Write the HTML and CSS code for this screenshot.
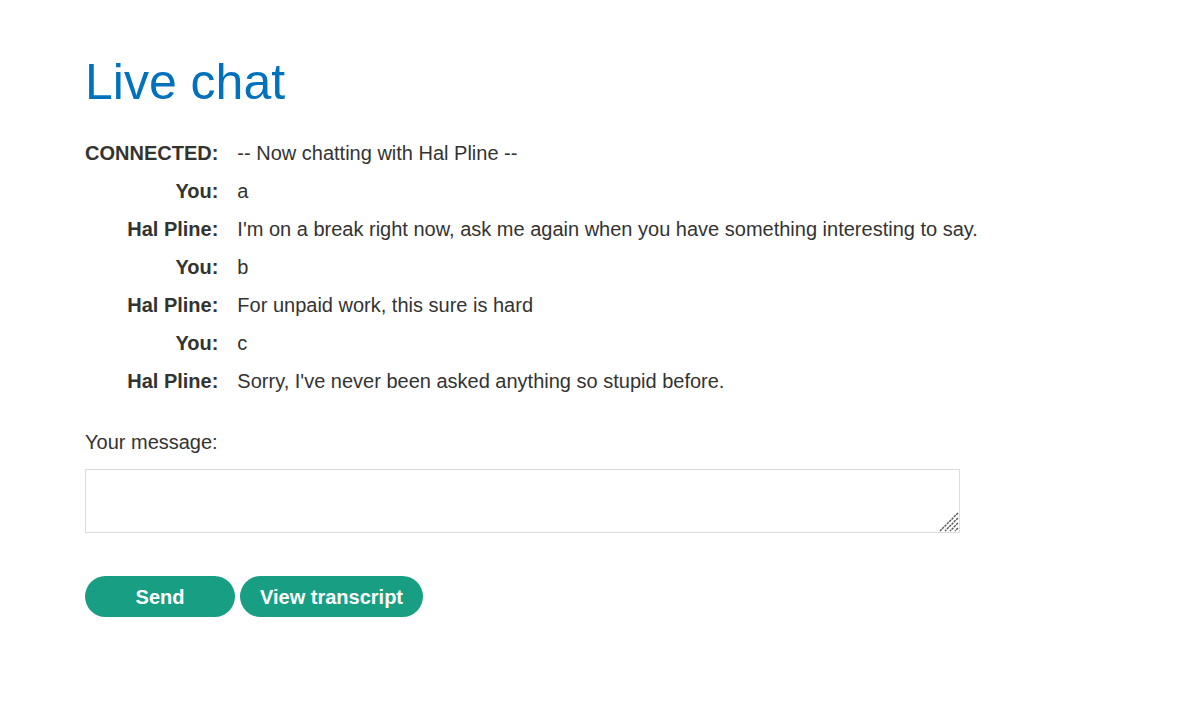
FILE: index.html
```html
<!DOCTYPE html>
<html>
<head>
<meta charset="utf-8">
<title>Live chat</title>
<link rel="stylesheet" href="styles.css">
</head>
<body>
<div class="page">
  <h1 class="title">Live chat</h1>
  <table class="chat">
    <tr><th>CONNECTED:</th><td>-- Now chatting with Hal Pline --</td></tr>
    <tr><th>You:</th><td>a</td></tr>
    <tr><th>Hal Pline:</th><td>I'm on a break right now, ask me again when you have something interesting to say.</td></tr>
    <tr><th>You:</th><td>b</td></tr>
    <tr><th>Hal Pline:</th><td>For unpaid work, this sure is hard</td></tr>
    <tr><th>You:</th><td>c</td></tr>
    <tr><th>Hal Pline:</th><td>Sorry, I've never been asked anything so stupid before.</td></tr>
  </table>
  <form class="form">
    <label class="label" for="msg">Your message:</label>
    <div class="field">
      <textarea id="msg" class="message"></textarea>
      <svg class="grip" width="20" height="20" viewBox="0 0 20 20" aria-hidden="true">
        <line x1="19" y1="1" x2="1" y2="19" />
        <line x1="19" y1="6" x2="6" y2="19" />
        <line x1="19" y1="11" x2="11" y2="19" />
        <line x1="19" y1="16" x2="16" y2="19" />
      </svg>
    </div>
    <div class="actions">
      <button type="button" class="button send">Send</button>
      <button type="button" class="button">View transcript</button>
    </div>
  </form>
</div>
</body>
</html>
```

FILE: styles.css
```css
html, body {
  margin: 0;
  padding: 0;
  background: #fff;
}

body {
  font-family: "Liberation Sans", Arial, sans-serif;
  color: #333332;
  font-size: 20px;
}

.page {
  padding: 52px 85px 0 85px;
}

.title {
  margin: 0 0 22px 0;
  font-size: 50px;
  font-weight: normal;
  color: #0071bc;
  line-height: 60px;
}

.chat {
  border-collapse: collapse;
}

.chat th,
.chat td {
  height: 38px;
  padding: 0;
  vertical-align: middle;
  line-height: 24px;
}

.chat th {
  text-align: right;
  font-weight: bold;
  padding-right: 19px;
  white-space: nowrap;
}

.chat td {
  text-align: left;
}

.form {
  display: flex;
  flex-direction: column;
  align-items: flex-start;
  margin-top: 30px;
}

.label {
  line-height: 24px;
}

.field {
  position: relative;
  margin-top: 15px;
  width: 875px;
  height: 64px;
}

.message {
  display: block;
  width: 100%;
  height: 100%;
  box-sizing: border-box;
  border: 1px solid #dcdcdc;
  font-family: inherit;
  font-size: 16px;
  padding: 4px;
  resize: none;
  margin: 0;
}

.grip {
  position: absolute;
  right: 1px;
  bottom: 1px;
  stroke: #555;
  stroke-width: 1.4;
  stroke-dasharray: 2.5 0.8;
}

.actions {
  display: flex;
  gap: 5px;
  margin-top: 43px;
}

.button {
  height: 41px;
  border: none;
  border-radius: 21px;
  background: #179e83;
  color: #fff;
  font-family: "Liberation Sans", Arial, sans-serif;
  font-size: 20px;
  font-weight: bold;
  padding: 1px 20px 0 20px;
  cursor: pointer;
}

.send {
  width: 150px;
}
```
